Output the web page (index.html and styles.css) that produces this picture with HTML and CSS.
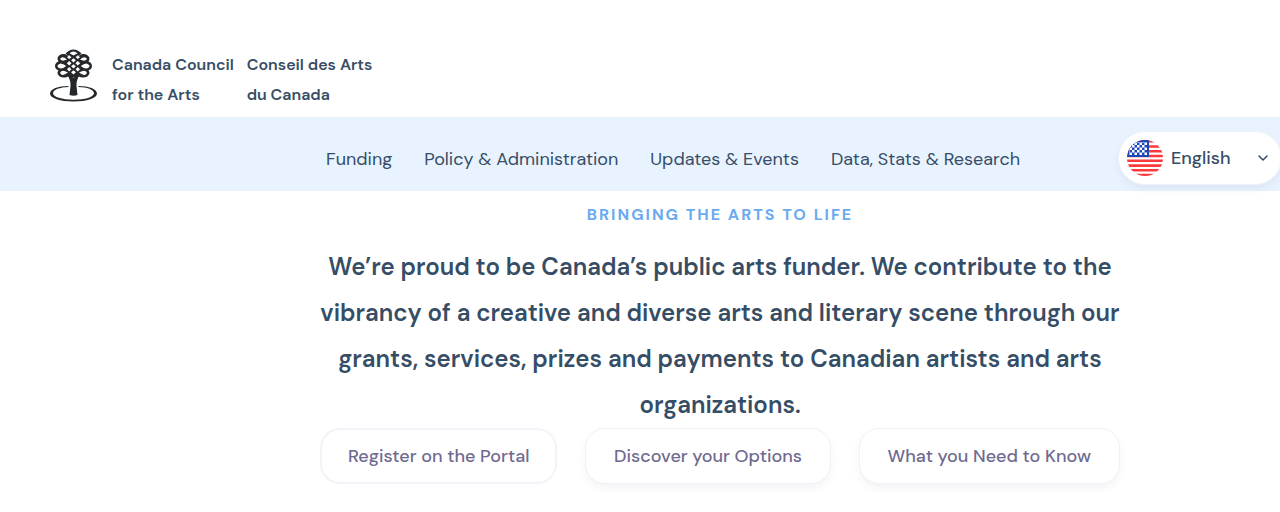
FILE: index.html
```html
<!DOCTYPE html>
<html lang="en">
<head>
<meta charset="utf-8">
<meta name="viewport" content="width=device-width, initial-scale=1">
<title>Canada Council for the Arts</title>
<link rel="stylesheet" href="styles.css">
</head>
<body>
<header class="brand">
  <svg class="brand-logo" viewBox="0 1 48 53" aria-hidden="true">
    <g fill="#25282b">
      <path d="M15.500 4.500Q23.500-3.500 31.500 4.500L27 8H20Z"/>
      <path d="M16 7H31L34 22 28 28H19L13 22Z"/>
      <ellipse cx="13.500" cy="9.800" rx="6" ry="4.800"/>
      <ellipse cx="33.500" cy="9.800" rx="6" ry="4.800"/>
      <ellipse cx="11" cy="17" rx="6" ry="5"/>
      <ellipse cx="36" cy="17" rx="6" ry="5"/>
      <ellipse cx="14" cy="23.800" rx="6.500" ry="4.800"/>
      <ellipse cx="33" cy="23.800" rx="6.500" ry="4.800"/>
    </g>
    <g fill="#fff">
      <path d="M19.500 4.200Q23.500 1 27.500 4.200L23.500 6.500Z"/>
      <path d="M10 10Q12 6.500 17 10.500 12 13 10 10ZM37 10Q35 6.500 30 10.500 35 13 37 10Z"/>
      <path d="M7.200 17Q10 12 16.200 17 10 22 7.200 17ZM39.800 17Q37 12 30.800 17 37 22 39.800 17Z"/>
      <path d="M10 24Q11.500 20 18 23.500 12 28 10 24ZM37 24Q35.500 20 29 23.500 35 28 37 24Z"/>
      <path d="M19.200 6.300 21.400 8.200 19.200 10.100 17 8.200ZM27.800 6.300 30 8.200 27.800 10.100 25.600 8.200ZM23.500 9.200 25.900 11.300 23.500 13.400 21.100 11.300ZM19.200 12 21.600 14.200 19.200 16.400 16.800 14.200ZM27.800 12 30.200 14.200 27.800 16.400 25.400 14.200ZM23.500 15.200 25.900 17.300 23.500 19.400 21.100 17.300ZM19.200 18 21.400 20.200 19.200 22.400 17 20.200ZM27.800 18 30 20.200 27.800 22.400 25.600 20.200ZM23.500 21.200 25.900 23.300 23.500 25.400 21.100 23.300Z"/>
    </g>
    <path fill="#25282b" d="M17.500 26 23.500 28.500 29.500 26Q26 32 26.500 37L27.500 46Q23.500 47.500 19.500 46L20.500 37Q21 32 17.500 26Z"/>
    <path fill="#25282b" fill-rule="evenodd" d="M18.500 37C8 37 0 40 0 44.500S10 52.500 23.500 52.500 47 49 47 44.500 39 37 28.500 37V38C37 38.300 44 40.500 44 44.300S35 50.700 23.500 50.700 3 48 3 44.300 10 38.300 18.500 38Z"/>
  </svg>
  <p class="brand-name">Canada Council<br>for the Arts</p>
  <p class="brand-name" lang="fr">Conseil des Arts<br>du Canada</p>
</header>
<div class="bar">
  <nav class="nav" aria-label="Main">
    <a href="#funding">Funding</a>
    <a href="#policy">Policy &amp; Administration</a>
    <a href="#updates">Updates &amp; Events</a>
    <a href="#data">Data, Stats &amp; Research</a>
  </nav>
  <button class="language" type="button" aria-haspopup="listbox">
    <svg class="flag" viewBox="0 0 36 36" aria-hidden="true">
      <defs>
        <clipPath id="disc"><circle cx="18" cy="18" r="18"/></clipPath>
        <pattern id="stars" width="5" height="5" patternUnits="userSpaceOnUse">
          <rect width="5" height="5" fill="#1c48b8"/>
          <path d="M0 0H2.500V2.500H0ZM2.500 2.500H5V5H2.500Z" fill="#fff"/>
        </pattern>
      </defs>
      <g clip-path="url(#disc)">
        <rect width="36" height="36" fill="#fff"/>
        <path stroke="#fb3b3b" stroke-width="2.600" d="M0 1.300H36M0 6.500H36M0 11.200H36M0 16H36M0 20.800H36M0 25.600H36M0 30.300H36M0 35H36"/>
        <rect width="22" height="17" fill="#1c48b8"/>
        <rect x="2" y="2" width="18" height="13" fill="url(#stars)"/>
      </g>
    </svg>
    <span class="language-name">English</span>
    <svg class="chevron" viewBox="0 0 10 6" aria-hidden="true"><path d="M1 1 5 5 9 1" fill="none" stroke="#334a62" stroke-width="1.500" stroke-linecap="round" stroke-linejoin="round"/></svg>
  </button>
</div>
<main class="hero">
  <p class="eyebrow">BRINGING THE ARTS TO LIFE</p>
  <h1 class="headline">We’re proud to be Canada’s public arts funder. We contribute to the vibrancy of a creative and diverse arts and literary scene through our grants, services, prizes and payments to Canadian artists and arts organizations.</h1>
  <div class="actions">
    <button class="action action-flat" type="button">Register on the Portal</button>
    <button class="action" type="button">Discover your Options</button>
    <button class="action" type="button">What you Need to Know</button>
  </div>
</main>
</body>
</html>
```
FILE: styles.css
```css
* { box-sizing: border-box; }
body {
  margin: 0;
  overflow-x: hidden;
  background: #fff;
  color: #364d66;
  font-family: "DM Sans", Inter, sans-serif;
}
p, h1 { margin: 0; }
button { font: inherit; color: inherit; cursor: pointer; }
.brand {
  display: flex;
  align-items: flex-start;
  padding: 50px 50px 7px;
}
.brand-logo { width: 48px; height: 53px; margin-right: 14px; overflow: visible; }
.brand-name {
  margin-right: 13px;
  font-size: 16px;
  font-weight: 600;
  line-height: 30px;
}
.bar {
  display: flex;
  align-items: center;
  justify-content: space-between;
  min-height: 74px;
  margin-right: -2px;
  padding-left: 326px;
  background: #e8f3ff;
}
.nav { display: flex; gap: 32px; padding-top: 10px; }
.nav a {
  color: inherit;
  font-size: 18px;
  line-height: 26px;
  text-decoration: none;
  white-space: nowrap;
}
.language {
  display: flex;
  align-items: center;
  width: 164px;
  height: 54px;
  margin-top: 8px;
  padding: 0 13px 0 8px;
  border: 1px solid #f0f2fa;
  border-radius: 27px;
  background: #fff;
  box-shadow: 0 4px 8px rgba(8, 15, 52, 0.05);
  font-size: 18px;
  font-weight: 500;
}
.flag { width: 36px; height: 36px; margin-right: 8px; }
.chevron { width: 10px; height: 6px; margin-left: auto; }
.hero { padding: 12px 156px 24px 316px; text-align: center; }
.eyebrow {
  color: #6aaaf0;
  font-size: 16px;
  font-weight: 700;
  line-height: 24px;
  letter-spacing: 2px;
}
.headline {
  margin-top: 17px;
  font-size: 24px;
  font-weight: 600;
  line-height: 46px;
}
.actions { display: flex; justify-content: space-between; padding: 0 4px; }
.action {
  height: 56px;
  padding: 0 28px;
  border: 1px solid #f1f1f9;
  border-radius: 20px;
  background: #fff;
  box-shadow: 0 4px 10px rgba(8, 15, 52, 0.05);
  color: #6f6b90;
  font-size: 18px;
  font-weight: 500;
  white-space: nowrap;
}
.action-flat { border-width: 2px; border-color: #f4f3fa; padding: 0 26px; box-shadow: none; }
```
